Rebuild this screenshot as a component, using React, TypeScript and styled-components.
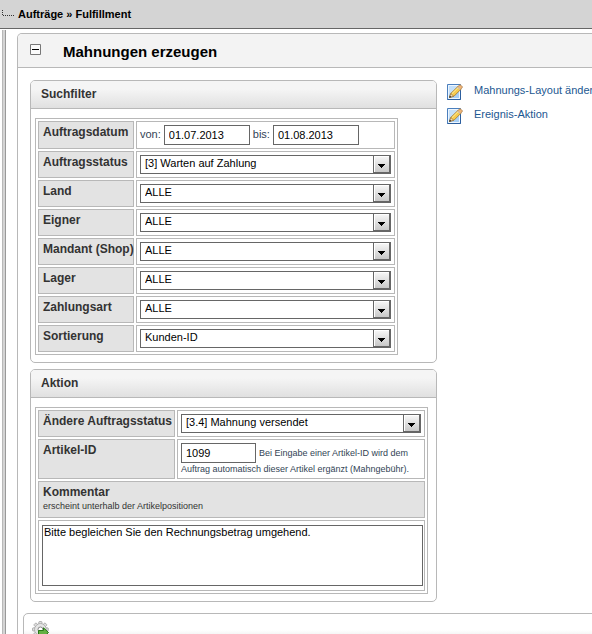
import React from "react";
import styled, { createGlobalStyle } from "styled-components";

const GlobalStyle = createGlobalStyle`
  * { box-sizing: border-box; }
  html, body { margin: 0; height: 100%; overflow: hidden; background: #fff; }
  body { font-family: "Liberation Sans", Arial, sans-serif; font-size: 11px; color: #333; }
  #root { height: 100%; }
  input, select, textarea, button { font-family: inherit; font-size: 11px; }
`;

const Page = styled.div`
  display: flex;
  flex-direction: column;
  height: 100%;
  min-width: 640px;
`;

const Breadcrumb = styled.nav`
  display: flex;
  align-items: center;
  flex: none;
  height: 29px;
  gap: 4px;
  padding-left: 2px;
  background: #d4d4d4;
  border-bottom: 1px solid #666;
  color: #000;
  font-weight: bold;
`;

const Body = styled.div`
  display: flex;
  flex: 1;
  min-height: 0;
  padding-top: 1px;
`;

const Rail = styled.div`
  flex: none;
  width: 4px;
  margin: 0 11px 0 2px;
  background: #d4d4d4;
  border-left: 1px solid #b8b8b8;
  border-right: 1px solid #999;
`;

const Main = styled.main`
  flex: 1;
  min-width: 0;
  margin-top: 3px;
  overflow: hidden;
  border: 1px solid #b8b8b8;
  border-bottom: 0;
  border-radius: 5px 5px 0 0;
`;

const MainHeader = styled.header`
  display: flex;
  align-items: center;
  height: 34px;
  gap: 22px;
  padding-left: 12px;
  background: #f3f3f3;
  border-bottom: 1px solid #b8b8b8;
  border-radius: 4px 4px 0 0;
`;

const Collapse = styled.button`
  display: flex;
  width: 11px;
  height: 11px;
  margin-bottom: 3px;
  padding: 0;
  border: 0;
  background: none;
`;

const Title = styled.h1`
  margin: 2px 0 0;
  color: #000;
  font-size: 15px;
`;

const Columns = styled.div`
  display: flex;
  align-items: flex-start;
  gap: 10px;
  padding: 12px 12px 0;
`;

const Forms = styled.form`
  display: flex;
  flex: 0 0 407px;
  flex-direction: column;
  gap: 6px;
`;

const Panel = styled.section`
  border: 1px solid #b8b8b8;
  border-radius: 5px;
  background: #fff;
`;

const PanelTitle = styled.h2`
  height: 28px;
  margin: 0;
  padding: 0 10px;
  border-bottom: 1px solid #b8b8b8;
  border-radius: 4px 4px 0 0;
  background: linear-gradient(#f5f5f5 30%, #e0e0e0);
  font-size: 12px;
  line-height: 26px;
`;

const FieldTable = styled.table<{ $wide?: boolean }>`
  width: ${(p) => (p.$wide ? "393px" : "363px")};
  margin: 9px 4px 7px;
  border: 1px solid #b8b8b8;
  border-collapse: separate;
  border-spacing: 2px;
  table-layout: fixed;
`;

const LabelCol = styled.col<{ $wide?: boolean }>`
  width: ${(p) => (p.$wide ? "137px" : "96px")};
`;

const LabelCell = styled.th`
  padding: 3px 0 5px 4px;
  border: 1px solid #b8b8b8;
  background: #e3e3e3;
  font-size: 12px;
  line-height: 14px;
  text-align: left;
  vertical-align: top;
  white-space: nowrap;
`;

const ValueCell = styled.td`
  padding: 3px;
  border: 1px solid #b8b8b8;
  line-height: 14px;
  vertical-align: top;
`;

const DateRow = styled.div`
  display: flex;
  align-items: center;
  gap: 3px;
  height: 20px;
  color: #345;
`;

const DateLabel = styled.label`
  margin-bottom: 2px;
`;

const TextInput = styled.input<{ $short?: boolean }>`
  width: ${(p) => (p.$short ? "75px" : "86px")};
  height: 20px;
  padding: 0 4px 1px;
  border: 1px solid #666;
  border-radius: 0;
  background: #fff;
  color: #000;
`;

const SelectBox = styled.div`
  position: relative;
  height: 19px;
`;

const Select = styled.select`
  display: block;
  width: 100%;
  height: 19px;
  padding: 0 22px 3px 4px;
  border: 1px solid #666;
  border-radius: 0;
  appearance: none;
  background: #fff;
  color: #000;
`;

const Arrow = styled.svg`
  position: absolute;
  top: 1px;
  right: 0;
  pointer-events: none;
`;

const Hint = styled.span`
  display: block;
  color: #345;
  font-size: 9px;
  font-weight: normal;
  line-height: 12px;
`;

const ArticleNote = styled.label`
  display: block;
  height: 32px;
  white-space: nowrap;
`;

const ArticleRow = styled.span`
  display: flex;
  align-items: center;
  gap: 3px;
  height: 20px;
`;

const CommentHint = styled(Hint)`
  margin-top: 1px;
  color: #333;
`;

const CommentCell = styled(LabelCell)`
  height: 36px;
`;

const TextareaCell = styled(ValueCell)`
  padding: 4px 1px 4px 3px;
`;

const Textarea = styled.textarea`
  display: block;
  width: 100%;
  height: 61px;
  padding: 0 1px;
  border: 1px solid #666;
  resize: none;
  color: #000;
`;

const Links = styled.nav`
  display: flex;
  flex-direction: column;
  gap: 8px;
  padding-top: 4px;
`;

const ActionLink = styled.a`
  display: flex;
  align-items: flex-start;
  gap: 11px;
  color: #1c5791;
  font-size: 11px;
  line-height: 12px;
  text-decoration: none;
  white-space: nowrap;
`;

const Footer = styled.section`
  height: 60px;
  margin: 11px 5px 0;
  padding: 7px 8px;
  border: 1px solid #b8b8b8;
  border-radius: 5px;
  background: linear-gradient(#fff 16px, #f3f3f3 21px);
`;

const GearButton = styled.button`
  display: flex;
  padding: 0;
  border: 0;
  background: none;
`;

function TreeDots() {
  return (
    <svg width="12" height="8" viewBox="0 0 12 8" aria-hidden="true">
      <path d="M.5 0v6M1 5.5h11" stroke="#333" strokeDasharray="1 1" fill="none" />
    </svg>
  );
}

function EditIcon() {
  return (
    <svg width="16" height="16" viewBox="0 0 16 16" aria-hidden="true">
      <path d="M.5.5h13v15H.5z" fill="#b9daf7" stroke="#4b7fbd" />
      <path d="M1.5 1.5h11v13h-11z" fill="#c5e0f9" stroke="#edf6ff" />
      <path d="M2 10 12 5v9H2z" fill="#a8cff5" />
      <path d="M.5 15.5h13V6" fill="none" stroke="#2c5f9e" />
      <path d="m2.6 13.4 1.2-4L11 2.4l2.9 2.9-7 7z" fill="#f6cb4e" stroke="#a87624" strokeWidth=".8" />
      <path d="m5 9.6 6.3-6.2" stroke="#fff0a0" />
      <path d="m2.6 13.4 1.1-3.9 3 2.7z" fill="#f3dbb0" stroke="#8b642c" strokeWidth=".6" />
      <path d="m2.2 13.8.6-2.1 1.6 1.4z" fill="#222" />
      <path d="m10.4 3 1.8-1.8c.7-.6 1.3-.4 1.9.2l.8.8c.6.6.6 1.1 0 1.7l-1.6 1.7z" fill="#f0b578" stroke="#98703a" strokeWidth=".7" />
      <path d="m10.4 3 2.8 2.6" stroke="#ddd" />
    </svg>
  );
}

function GearIcon() {
  const teeth = [0, 45, 90, 135, 180, 225, 270, 315];
  return (
    <svg width="17" height="17" viewBox="0 0 17 17" aria-hidden="true">
      <g fill="#ddd" stroke="#999" strokeWidth=".7">
        {teeth.map((a) => (
          <rect key={a} x="6.8" y=".5" width="3.2" height="4" rx=".8" transform={`rotate(${a} 8.4 8.4)`} />
        ))}
        <circle cx="8.4" cy="8.4" r="5.7" />
      </g>
      <circle cx="8.4" cy="8.4" r="5.3" fill="#e4e4e4" />
      <circle cx="8.4" cy="8.4" r="2.4" fill="#fff" stroke="#888" />
      <path d="M6.5 9.5h5v-2.7l5 4.7-5 4.7v-2.7h-5z" fill="#65b044" stroke="#267815" />
    </svg>
  );
}

function DropDown({ id, value }: { id: string; value: string }) {
  return (
    <SelectBox>
      <Select id={id} defaultValue={value}>
        <option>{value}</option>
      </Select>
      <Arrow width="18" height="18" viewBox="0 0 18 18" aria-hidden="true">
        <defs>
          <linearGradient id={`${id}-face`} x2="0" y2="1">
            <stop stopColor="#f5f5f5" />
            <stop offset="1" stopColor="#c8c8c8" />
          </linearGradient>
        </defs>
        <path d="M0 0h18v18H0z" fill="#666" />
        <path d="M1 0h15v16H1z" fill="#fff" />
        <path d="M2 1h14v15H2z" fill={`url(#${id}-face)`} />
        <path d="M5 8h7v1h-1v1h-1v1H9v1H8v-1H7v-1H6V9H5z" fill="#000" />
      </Arrow>
    </SelectBox>
  );
}

const filters = [
  { id: "status", label: "Auftragsstatus", value: "[3] Warten auf Zahlung" },
  { id: "land", label: "Land", value: "ALLE" },
  { id: "eigner", label: "Eigner", value: "ALLE" },
  { id: "mandant", label: "Mandant (Shop)", value: "ALLE" },
  { id: "lager", label: "Lager", value: "ALLE" },
  { id: "zahlungsart", label: "Zahlungsart", value: "ALLE" },
  { id: "sortierung", label: "Sortierung", value: "Kunden-ID" },
];

export default function App() {
  return (
    <>
      <GlobalStyle />
      <Page>
        <Breadcrumb>
          <TreeDots />
          <span>Aufträge » Fulfillment</span>
        </Breadcrumb>
        <Body>
          <Rail />
          <Main>
            <MainHeader>
              <Collapse type="button" aria-label="Einklappen">
                <svg width="11" height="11" viewBox="0 0 11 11">
                  <path d="M.5.5h10v10H.5z" fill="#fafafa" stroke="#777" />
                  <path d="M2 5.5h7" stroke="#000" />
                </svg>
              </Collapse>
              <Title>Mahnungen erzeugen</Title>
            </MainHeader>
            <Columns>
              <Forms>
                <Panel>
                  <PanelTitle>Suchfilter</PanelTitle>
                  <FieldTable>
                    <colgroup>
                      <LabelCol />
                      <col />
                    </colgroup>
                    <tbody>
                      <tr>
                        <LabelCell scope="row">Auftragsdatum</LabelCell>
                        <ValueCell>
                          <DateRow>
                            <DateLabel htmlFor="von">von:</DateLabel>
                            <TextInput id="von" defaultValue="01.07.2013" />
                            <DateLabel htmlFor="bis">bis:</DateLabel>
                            <TextInput id="bis" defaultValue="01.08.2013" />
                          </DateRow>
                        </ValueCell>
                      </tr>
                      {filters.map((f) => (
                        <tr key={f.id}>
                          <LabelCell scope="row">
                            <label htmlFor={f.id}>{f.label}</label>
                          </LabelCell>
                          <ValueCell>
                            <DropDown id={f.id} value={f.value} />
                          </ValueCell>
                        </tr>
                      ))}
                    </tbody>
                  </FieldTable>
                </Panel>
                <Panel>
                  <PanelTitle>Aktion</PanelTitle>
                  <FieldTable $wide>
                    <colgroup>
                      <LabelCol $wide />
                      <col />
                    </colgroup>
                    <tbody>
                      <tr>
                        <LabelCell scope="row">
                          <label htmlFor="neuerstatus">Ändere Auftragsstatus</label>
                        </LabelCell>
                        <ValueCell>
                          <DropDown id="neuerstatus" value="[3.4] Mahnung versendet" />
                        </ValueCell>
                      </tr>
                      <tr>
                        <LabelCell scope="row">
                          <label htmlFor="artikel">Artikel-ID</label>
                        </LabelCell>
                        <ValueCell>
                          <ArticleNote htmlFor="artikel">
                            <ArticleRow>
                              <TextInput id="artikel" $short defaultValue="1099" />
                              <Hint>Bei Eingabe einer Artikel-ID wird dem</Hint>
                            </ArticleRow>
                            <Hint>Auftrag automatisch dieser Artikel ergänzt (Mahngebühr).</Hint>
                          </ArticleNote>
                        </ValueCell>
                      </tr>
                      <tr>
                        <CommentCell colSpan={2}>
                          <label htmlFor="kommentar">Kommentar</label>
                          <CommentHint>erscheint unterhalb der Artikelpositionen</CommentHint>
                        </CommentCell>
                      </tr>
                      <tr>
                        <TextareaCell colSpan={2}>
                          <Textarea id="kommentar" defaultValue="Bitte begleichen Sie den Rechnungsbetrag umgehend." />
                        </TextareaCell>
                      </tr>
                    </tbody>
                  </FieldTable>
                </Panel>
              </Forms>
              <Links>
                <ActionLink href="#layout">
                  <EditIcon />
                  <span>Mahnungs-Layout ändern</span>
                </ActionLink>
                <ActionLink href="#ereignis">
                  <EditIcon />
                  <span>Ereignis-Aktion</span>
                </ActionLink>
              </Links>
            </Columns>
            <Footer>
              <GearButton type="button" aria-label="Ausführen">
                <GearIcon />
              </GearButton>
            </Footer>
          </Main>
        </Body>
      </Page>
    </>
  );
}
